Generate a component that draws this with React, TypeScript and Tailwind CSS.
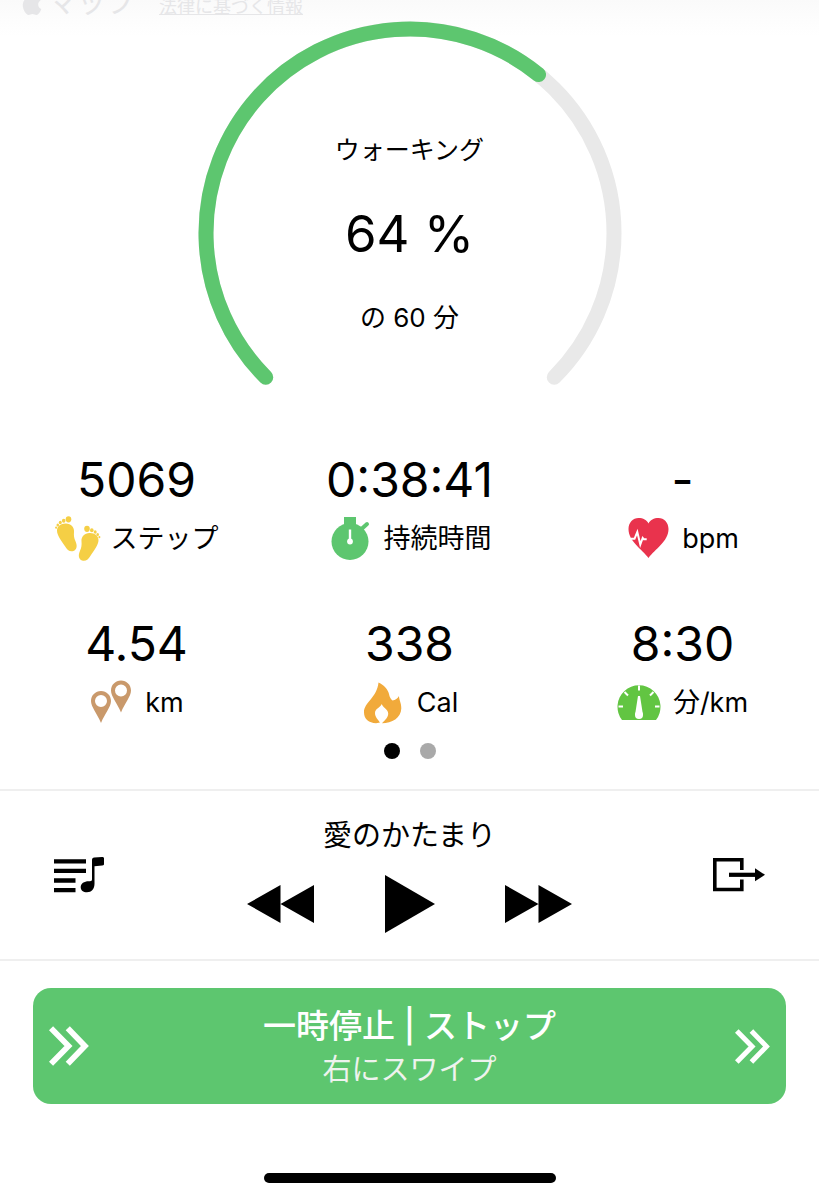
import type { ReactNode } from 'react';

interface StatProps {
  value : string;
  label : string;
  icon  : ReactNode;
}

interface ProgressRingProps {
  minutes : number;
  goal    : number;
}

const RING = { cx: 212, cy: 212, r: 204, sweep: 270 };

function ringPoint(deg: number) {
  const rad = (deg * Math.PI) / 180;
  return `${RING.cx + RING.r * Math.sin(rad)} ${RING.cy - RING.r * Math.cos(rad)}`;
}

function ringArc(sweep: number) {
  const large = sweep > 180 ? 1 : 0;
  return `M${ringPoint(-135)} A${RING.r} ${RING.r} 0 ${large} 1 ${ringPoint(-135 + sweep)}`;
}

/* Icons */

function AppleIcon() {
  return (
    <svg className="w-5 h-6" viewBox="0 0 20 24" fill="currentColor" aria-hidden="true">
      <path d="M14 0c.2 2.400-1.600 4.600-4 4.700C9.700 2.500 11.700.3 14 0zM10.300 6.300c1 0 2.200-1.300 4.300-1.200 1.700.1 3.200.9 4 2.200-3.600 2.300-3 7.200.7 8.700-.8 2.400-2.900 6-5 6-1.500 0-2-.9-3.800-.9s-2.400.9-3.800.9C3.900 22 .5 16.200.8 11.500 1 7.500 3.600 5.200 6.400 5.200c1.700 0 2.900 1.100 3.900 1.100z" />
    </svg>
  );
}

function Foot() {
  return (
    <>
      <path d="M2 14.500C2 10.500 6 7.300 11 7.600c5 .2 8.500 3.700 8 8.500-.3 3.500 0 6 1.500 9.200 2 4.500 1.500 8.500-2.100 9.800-3.500 1-6.400-1-8.400-4.800C6.500 25 2 19.500 2 14.500z" />
      <ellipse cx="13.500" cy="3.300" rx="2.800" ry="3.100" />
      <ellipse cx="8.700" cy="4.700" rx="1.800" ry="2" />
      <ellipse cx="5.300" cy="6.500" rx="1.500" ry="1.700" />
      <ellipse cx="2.800" cy="8.900" rx="1.300" ry="1.500" />
      <ellipse cx="1.100" cy="11.600" rx="1" ry="1.200" />
    </>
  );
}

function StepsIcon() {
  return (
    <svg className="w-[46px] h-[46px]" viewBox="0 0 46 46" fill="#f5cf45" aria-hidden="true">
      <g><Foot /></g>
      <g transform="translate(45.500 9.500) scale(-1 1)"><Foot /></g>
    </svg>
  );
}

function StopwatchIcon() {
  return (
    <svg className="w-[46px] h-[46px]" viewBox="0 0 46 46" aria-hidden="true">
      <g fill="#5dc66f">
        <circle cx="22" cy="25.500" r="18.500" />
        <rect x="16" y="1" width="12" height="8" />
        <path d="M33.500 13l5.500-5" stroke="#5dc66f" strokeWidth="4" strokeLinecap="round" />
      </g>
      <path d="M22 13.500v12" stroke="#fff" strokeWidth="2.400" />
      <circle cx="22" cy="25.500" r="2.900" fill="#fff" />
    </svg>
  );
}

function HeartIcon() {
  return (
    <svg className="w-[46px] h-[46px]" viewBox="0 0 46 46" aria-hidden="true">
      <path d="M22.500 42C16 33 2.500 25.500 2.500 13 2.500 6.500 7 2 12.500 2c4.500 0 8.500 2 10 5.500C24 4 28 2 32.500 2c5.500 0 10 4.500 10 11 0 12.500-13.500 20-20 29z" fill="#e9334d" />
      <path d="M5 22.800h3.500l2.800-6.800 3 12.500 2.400-6.500 1 1.200h3" fill="none" stroke="#fff" strokeWidth="2" />
    </svg>
  );
}

function Pin() {
  return (
    <path fillRule="evenodd" d="M10 0c5.600 0 10 4.400 10 10 0 6-6.200 12.500-10 22C6.200 22.500 0 16 0 10 0 4.400 4.400 0 10 0zm0 4a6 6 0 1 0 0 12 6 6 0 0 0 0-12z" />
  );
}

function PinsIcon() {
  return (
    <svg className="w-[46px] h-[46px]" viewBox="0 0 46 46" fill="#c9996b" aria-hidden="true">
      <g transform="translate(2 11)"><Pin /></g>
      <g transform="translate(22 0.500)"><Pin /></g>
    </svg>
  );
}

function FlameIcon() {
  return (
    <svg className="w-[46px] h-[46px]" viewBox="0 0 46 46" aria-hidden="true">
      <path d="M17.500 2.500C23 5 27 9.500 28 14c.5 3 2 5.500 3.500 6.500 3-.5 5-2 6.500-4.500 0 4 2.500 7 2.300 12.500C40 38 31 43.300 21 43.300c3-3.300 6.200-5.800 6.200-9.800-.2-4.500-4.700-5-6.500-9.500C19.500 27.500 14 28.500 14 33c0 4 3 6.500 5 9.500l-4 .7C8 43 3 39 3 32.500 3 22 16 18 17.500 2.500z" fill="#f1aa3b" />
    </svg>
  );
}

function GaugeIcon() {
  return (
    <svg className="w-[46px] h-[46px]" viewBox="0 0 46 46" aria-hidden="true">
      <path d="M5 40A21.500 21.500 0 1 1 39 40z" fill="#62c542" />
      <path d="M22 5.500v5M7.500 12l3.500 3.500M36.500 12L33 15.500M1.500 26.500h4.500M38 26.500h4.500" stroke="#fff" strokeWidth="2" />
      <path d="M21 16h2l3 19h-8z" fill="#fff" />
      <circle cx="22" cy="35" r="4" fill="#fff" />
    </svg>
  );
}

function PlaylistIcon() {
  return (
    <svg className="w-[50px] h-9" viewBox="0 0 50 36" aria-hidden="true">
      <path d="M0 4.300h32M0 13.900h32M0 23.500h21.500M0 33.100h21.500" stroke="#000" strokeWidth="4.300" />
      <path d="M38 3.200C38 1.500 38.800.8 40.300.6L48 0c1.500 0 2.200.6 2.200 2v4.500c0 1.300-.7 1.900-2 2L40.500 9.300v17.500c0 5-3 8.500-7.500 8.500-3.800 0-6.300-2-6.300-5 0-3.800 3.400-6 8-6H36c1.500 0 2-.8 2-2z" />
    </svg>
  );
}

function ExitIcon() {
  return (
    <svg className="w-[52px] h-9" viewBox="0 0 52 36" aria-hidden="true">
      <path d="M28.800 13V2.800H1.800V32.500H28.800V22.500" fill="none" stroke="#000" strokeWidth="3.600" />
      <path d="M16 17.800h28" stroke="#000" strokeWidth="4.200" />
      <path d="M42 11.300l10 6.500-10 6.500z" />
    </svg>
  );
}

function ChevronsIcon({ className }: { className: string }) {
  return (
    <svg className={className} viewBox="0 0 39 39" fill="none" stroke="#fff" strokeWidth="5.600" aria-hidden="true">
      <path d="M2 2.200L19 19.500 2 36.800M18.300 2.200L35 19.500 18.300 36.800" />
    </svg>
  );
}

/* Sections */

function ProgressRing({ minutes, goal }: ProgressRingProps) {
  const ratio = minutes / goal;

  return (
    <section className="grid justify-center">
      <svg className="col-start-1 row-start-1 w-[424px] max-w-full" viewBox="0 0 424 365" fill="none" strokeWidth="15" strokeLinecap="round" aria-hidden="true">
        <path d={ringArc(RING.sweep)} stroke="#e9e9e9" />
        <path d={ringArc(RING.sweep * ratio)} stroke="#5dc66f" />
      </svg>
      <div className="col-start-1 row-start-1 flex flex-col items-center gap-9 pt-[111px]">
        <p className="text-[25px] leading-9">ウォーキング</p>
        <p className="text-[51px] leading-[60px]">{Math.floor(ratio * 100)} %</p>
        <p className="text-[26px] leading-9">の {goal} 分</p>
      </div>
    </section>
  );
}

function Stat({ value, label, icon }: StatProps) {
  return (
    <div className="flex flex-col items-center gap-1.5">
      <span className="text-[48px] leading-[60px]">{value}</span>
      <div className="flex items-center gap-2.5">
        {icon}
        <span className="text-[27px] leading-9 whitespace-nowrap">{label}</span>
      </div>
    </div>
  );
}

const STATS: StatProps[] = [
  { value: '5069',    label: 'ステップ', icon: <StepsIcon /> },
  { value: '0:38:41', label: '持続時間', icon: <StopwatchIcon /> },
  { value: '-',       label: 'bpm',      icon: <HeartIcon /> },
  { value: '4.54',    label: 'km',       icon: <PinsIcon /> },
  { value: '338',     label: 'Cal',      icon: <FlameIcon /> },
  { value: '8:30',    label: '分/km',    icon: <GaugeIcon /> },
];

function Player() {
  return (
    <section className="mt-[30px] flex items-center justify-between border-y-2 border-[#efefef] px-[54px] pt-[25px] pb-[26px]">
      <button aria-label="プレイリスト" className="w-[52px]"><PlaylistIcon /></button>
      <div className="flex w-[325px] flex-col gap-[19px]">
        <p className="text-center text-[29px] leading-10">愛のかたまり</p>
        <div className="flex items-center justify-between">
          <button aria-label="前の曲">
            <svg className="w-[67px] h-[38px]" viewBox="0 0 67 38" aria-hidden="true">
              <path d="M33.500 0v38L0 19zM67 0v38L33.500 19z" />
            </svg>
          </button>
          <button aria-label="再生">
            <svg className="w-[50px] h-[58px]" viewBox="0 0 50 58" aria-hidden="true">
              <path d="M0 0l50 29L0 58z" />
            </svg>
          </button>
          <button aria-label="次の曲">
            <svg className="w-[67px] h-[38px]" viewBox="0 0 67 38" aria-hidden="true">
              <path d="M0 0v38l33.500-19zM33.500 0v38L67 19z" />
            </svg>
          </button>
        </div>
      </div>
      <button aria-label="終了" className="w-[52px]"><ExitIcon /></button>
    </section>
  );
}

export default function App() {
  return (
    <main className="flex min-h-screen flex-col bg-[linear-gradient(#fafafa,#fff_36px)] font-['Inter','Noto_Sans_CJK_JP',sans-serif] text-black">
      {/* Bottom edge of the map, faded out */}
      <header className="flex h-[21px] items-end gap-6 overflow-hidden pb-1 pl-[22px] text-[#e6e6e8]">
        <div className="flex items-end gap-1.5">
          <AppleIcon />
          <span className="text-[29px] leading-7">マップ</span>
        </div>
        <a href="#legal" className="text-[18px] leading-5 underline">法律に基づく情報</a>
      </header>

      <ProgressRing minutes={38.68} goal={60} />

      <section className="mt-16 grid grid-cols-3 gap-y-[52px]">
        {STATS.map((s) => <Stat key={s.label} {...s} />)}
      </section>

      {/* Page dots */}
      <nav className="mt-[17px] flex justify-center gap-5">
        <button aria-label="ページ 1" className="size-4 rounded-full bg-black" />
        <button aria-label="ページ 2" className="size-4 rounded-full bg-[#a9a9a9]" />
      </nav>

      <Player />

      <button className="mx-[33px] mt-[27px] flex items-center justify-between rounded-[18px] bg-[#5dc66f] px-4 py-3 text-white">
        <ChevronsIcon className="w-10 h-10" />
        <span className="flex flex-col pt-1">
          <span className="text-[33px] leading-[44px] font-medium">一時停止 | ストップ</span>
          <span className="text-[29px] leading-[44px] text-[#eef3ee]">右にスワイプ</span>
        </span>
        <span className="flex w-10 justify-end">
          <ChevronsIcon className="w-[35px] h-[35px]" />
        </span>
      </button>

      {/* Home indicator */}
      <div className="mx-auto mt-[69px] mb-[17px] h-2.5 w-[292px] rounded-full bg-black" />
    </main>
  );
}
